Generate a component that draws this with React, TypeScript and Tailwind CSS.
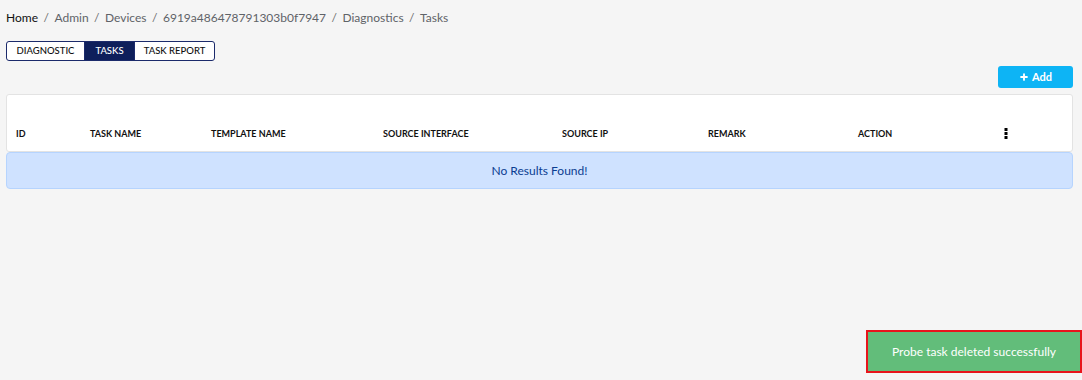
import { Plus } from 'lucide-react';

const crumbs = ['Home', 'Admin', 'Devices', '6919a486478791303b0f7947', 'Diagnostics', 'Tasks'];

const tabs = [
  { label: 'DIAGNOSTIC', w: 'w-[77px]' },
  { label: 'TASKS', w: 'w-[50px]', active: true },
  { label: 'TASK REPORT', w: 'w-[80px]' },
];

const columns = [
  { label: 'ID', w: 'w-[74px]' },
  { label: 'TASK NAME', w: 'w-[121px]' },
  { label: 'TEMPLATE NAME', w: 'w-[172px]' },
  { label: 'SOURCE INTERFACE', w: 'w-[179px]' },
  { label: 'SOURCE IP', w: 'w-[146px]' },
  { label: 'REMARK', w: 'w-[150px]' },
  { label: 'ACTION', w: 'w-[146px]' },
];

function KebabIcon() {
  return (
    <svg width="4" height="11" viewBox="0 0 4 11" className="text-black">
      <rect x="0.5" y="0" width="3" height="3" fill="currentColor" />
      <rect x="0.5" y="4" width="3" height="3" fill="currentColor" />
      <rect x="0.5" y="8" width="3" height="3" fill="currentColor" />
    </svg>
  );
}

export default function App() {
  return (
    <div className="relative h-[380px] w-[1082px] overflow-hidden bg-[#f5f5f5] font-['Lato',sans-serif]">
      <div className="px-[6px] pt-[9px]">
        {/* Breadcrumb */}
        <nav className="flex h-[18px] items-center text-[12px] leading-none text-[#5f6368]">
          {crumbs.map((c, i) => (
            <span key={c} className="flex items-center">
              {i > 0 && <span className="px-[5.5px] text-[#6c6c6c]">/</span>}
              <span className={i === 0 ? 'text-[#111]' : ''}>{c}</span>
            </span>
          ))}
        </nav>

        {/* Tabs */}
        <div className="mt-[14px] flex h-[20px] w-fit overflow-hidden rounded-[3px] border border-[#1b2a6b] bg-white">
          {tabs.map((t, i) => (
            <button
              key={t.label}
              className={`${t.w} flex items-center justify-center text-[9.5px] font-medium ${
                i > 0 ? 'border-l border-[#1b2a6b]' : ''
              } ${t.active ? 'bg-[#0e1f5b] text-white' : 'text-[#111]'}`}
            >
              {t.label}
            </button>
          ))}
        </div>

        {/* Toolbar */}
        <div className="mt-[5px] flex justify-end pr-[3px]">
          <button className="flex h-[22px] w-[75px] items-center justify-center gap-[3px] rounded-[3px] bg-[#0db4f5] text-[11px] font-bold text-white">
            <Plus size={10} strokeWidth={4.5} />
            Add
          </button>
        </div>

        {/* Table */}
        <div className="mt-[6px] mr-[3px] rounded-[3px] border border-[#e3e3e3] bg-white">
          <div className="flex h-[56px] items-end pb-[11px] pl-[9px] text-[9px] font-bold text-[#111]">
            {columns.map((c) => (
              <div key={c.label} className={c.w}>
                {c.label}
              </div>
            ))}
            <div className="flex w-[20px] items-center pb-[1px]">
              <KebabIcon />
            </div>
          </div>
        </div>
        <div className="mr-[3px] flex h-[37px] items-center justify-center rounded-[4px] border border-[#b6d4fe] bg-[#cfe2ff] text-[12px] text-[#0b3d91]">
          No Results Found!
        </div>
      </div>

      {/* Toast */}
      <div className="absolute left-[866px] top-[330px] flex h-[43px] w-[216px] items-center justify-center border-2 border-[#e8141c] bg-[#62bd7a] text-[12px] text-white">
        Probe task deleted successfully
      </div>
    </div>
  );
}
